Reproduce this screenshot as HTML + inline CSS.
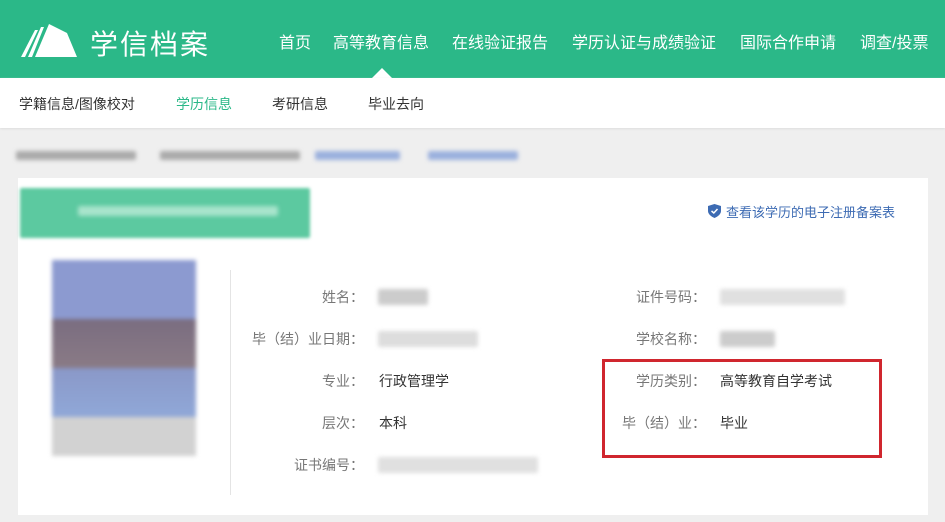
<!DOCTYPE html>
<html><head><meta charset="utf-8"><style>
*{margin:0;padding:0;box-sizing:border-box}
body{width:945px;height:522px;overflow:hidden;background:#efefef;font-family:"Liberation Sans","Noto Sans CJK SC",sans-serif;position:relative}
.hd{position:absolute;left:0;top:0;width:945px;height:78px;background:#2bb888}
.logo{position:absolute;left:90px;top:23px;color:#fff;font-size:28px;letter-spacing:2px}
.nav{position:absolute;top:29px;color:#fff;font-size:16px}
.arrow{position:absolute;left:372px;top:68px;width:0;height:0;border-left:10px solid transparent;border-right:10px solid transparent;border-bottom:10px solid #fff}
.sub{position:absolute;left:0;top:78px;width:945px;height:50px;background:#fff;box-shadow:0 1px 2px #ddd}
.sub span{position:absolute;top:16px;font-size:14px;color:#333}
.bl{position:absolute;filter:blur(2px);border-radius:2px}
.card{position:absolute;left:18px;top:178px;width:910px;height:337px;background:#fff}
.lab{position:absolute;font-size:14px;color:#777;text-align:right}
.val{position:absolute;font-size:14px;color:#333}
</style></head><body>
<div class="hd">
<svg style="position:absolute;left:19px;top:20px" width="60" height="38" viewBox="0 0 60 38"><path d="M2 37 L16 10 L19 10 L6 37Z M9 37 L22 7 L25 7 L13 37Z M16 37 L30 4 L48 13 L58 37Z" fill="#fff"/></svg>
<div class="logo">学信档案</div>
<div class="nav" style="left:279px">首页</div>
<div class="nav" style="left:333px">高等教育信息</div>
<div class="nav" style="left:452px">在线验证报告</div>
<div class="nav" style="left:572px">学历认证与成绩验证</div>
<div class="nav" style="left:740px">国际合作申请</div>
<div class="nav" style="left:860px">调查/投票</div>
<div class="arrow"></div>
</div>
<div class="sub">
<span style="left:19px">学籍信息/图像校对</span>
<span style="left:176px;color:#2bb888">学历信息</span>
<span style="left:272px">考研信息</span>
<span style="left:368px">毕业去向</span>
</div>
<div class="bl" style="left:16px;top:151px;width:120px;height:9px;background:#aaa"></div>
<div class="bl" style="left:160px;top:151px;width:140px;height:9px;background:#aaa"></div>
<div class="bl" style="left:315px;top:151px;width:85px;height:9px;background:#9ab0dd"></div>
<div class="bl" style="left:428px;top:151px;width:90px;height:9px;background:#9ab0dd"></div>
<div class="card">
<div class="bl" style="left:2px;top:10px;width:290px;height:50px;background:#5cc9a0;filter:blur(1.5px)"></div>
<div class="bl" style="left:60px;top:28px;width:200px;height:10px;background:#a8e4cc"></div>
<svg style="position:absolute;left:690px;top:26px" width="13" height="14" viewBox="0 0 13 14"><path d="M6.5 0 L13 2 V7 C13 10 10 12.5 6.5 14 C3 12.5 0 10 0 7 V2Z" fill="#3d6bb3"/><path d="M3.5 7 L5.8 9 L9.5 5" stroke="#fff" stroke-width="1.5" fill="none"/></svg>
<div class="val" style="left:708px;top:24px;font-size:13px;color:#3d6bb3">查看该学历的电子注册备案表</div>
<div style="position:absolute;left:34px;top:82px;width:144px;height:196px;filter:blur(2px);background:linear-gradient(#8c9ad0 0,#8c9ad0 30%,#7a6d80 30%,#8a7b86 55%,#8a98c8 55%,#90a8d8 80%,#d2d2d2 80%)"></div>
<div style="position:absolute;left:212px;top:92px;width:1px;height:225px;background:#e4e4e4"></div>
<div class="lab" style="left:240px;width:106px;top:109px">姓名：</div>
<div class="lab" style="left:200px;width:146px;top:151px">毕（结）业日期：</div>
<div class="lab" style="left:240px;width:106px;top:193px">专业：</div>
<div class="lab" style="left:240px;width:106px;top:235px">层次：</div>
<div class="lab" style="left:240px;width:106px;top:277px">证书编号：</div>
<div class="bl" style="left:360px;top:111px;width:50px;height:16px;background:#ccc"></div>
<div class="bl" style="left:360px;top:153px;width:100px;height:16px;background:#ddd"></div>
<div class="val" style="left:361px;top:193px">行政管理学</div>
<div class="val" style="left:361px;top:235px">本科</div>
<div class="bl" style="left:360px;top:279px;width:160px;height:16px;background:#e0e0e0"></div>
<div class="lab" style="left:580px;width:108px;top:109px">证件号码：</div>
<div class="lab" style="left:580px;width:108px;top:151px">学校名称：</div>
<div class="lab" style="left:580px;width:108px;top:193px">学历类别：</div>
<div class="lab" style="left:580px;width:108px;top:235px">毕（结）业：</div>
<div class="bl" style="left:702px;top:111px;width:125px;height:16px;background:#e0e0e0"></div>
<div class="bl" style="left:702px;top:153px;width:55px;height:16px;background:#ccc"></div>
<div class="val" style="left:702px;top:193px">高等教育自学考试</div>
<div class="val" style="left:702px;top:235px">毕业</div>
<div style="position:absolute;left:584px;top:181px;width:280px;height:99px;border:3px solid #d0262e"></div>
</div>
</body></html>
